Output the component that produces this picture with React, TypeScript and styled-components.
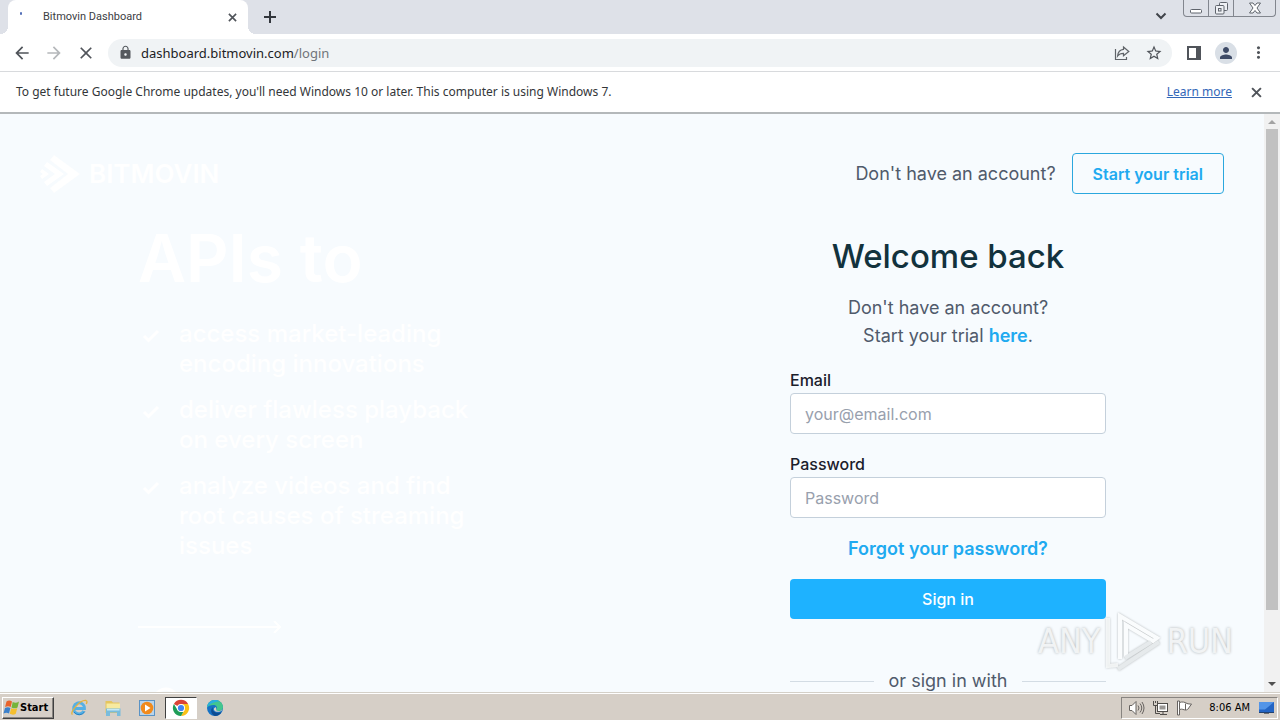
import React from "react";
import styled, { createGlobalStyle } from "styled-components";
import {
  MdArrowBack,
  MdArrowForward,
  MdClose,
  MdLock,
  MdMoreVert,
  MdPerson,
  MdStarBorder,
} from "react-icons/md";

const GlobalStyle = createGlobalStyle`
  * { box-sizing: border-box; }
  body { margin: 0; font-family: Inter, "Liberation Sans", sans-serif; }
  button, input { font: inherit; }
  h1, h2, p, ul { margin: 0; padding: 0; font-weight: 400; }
`;

const tabFont = `Roboto, "Liberation Sans", sans-serif`;
const chromeFont = `"Noto Sans", "Liberation Sans", sans-serif`;
const systemFont = `"DejaVu Sans Condensed", "DejaVu Sans", sans-serif`;

const Desktop = styled.div`
  display: flex;
  flex-direction: column;
  height: 100vh;
  overflow: hidden;
  background: #f7fbfe;
`;

const TabStrip = styled.div`
  display: flex;
  align-items: flex-start;
  height: 34px;
  flex: none;
  padding-left: 8px;
  background: #dee1e8;
`;

const Tab = styled.div`
  display: flex;
  align-items: center;
  position: relative;
  width: 240px;
  height: 34px;
  padding: 0 8px 0 12px;
  background: #fff;
  border-radius: 8px 8px 0 0;
  font: 11px/16px ${tabFont};
  color: #3c4043;

  &::before, &::after {
    content: "";
    position: absolute;
    bottom: 0;
    width: 8px;
    height: 8px;
  }
  &::before {
    left: -8px;
    background: radial-gradient(circle at 0 0, transparent 8px, #fff 8px);
  }
  &::after {
    right: -8px;
    background: radial-gradient(circle at 100% 0, transparent 8px, #fff 8px);
  }
`;

const TabTitle = styled.span`
  flex: 1;
  padding-left: 21px;
`;

const Spinner = styled.span`
  width: 2px;
  height: 3px;
  margin: 0 0 8px 0;
  background: #5570b8;
  border-radius: 1px;
`;

const IconButton = styled.button<{ $size?: number; $color?: string }>`
  display: flex;
  align-items: center;
  justify-content: center;
  flex: none;
  width: ${(p) => p.$size ?? 32}px;
  height: ${(p) => p.$size ?? 32}px;
  padding: 0;
  border: 0;
  background: none;
  color: ${(p) => p.$color ?? "#50545a"};
`;

const NewTab = styled(IconButton)`
  margin: 1px auto 0 6px;
`;

const WindowControls = styled.div`
  display: flex;
  height: 17px;
  margin: 0 4px 0 6px;
  border: 1px solid #82868e;
  border-top: 0;
  border-radius: 0 0 4px 4px;
`;

const WindowButton = styled.button<{ $width: number }>`
  display: flex;
  align-items: center;
  justify-content: center;
  width: ${(p) => p.$width}px;
  padding: 0;
  border: 0;
  background: none;
  & + & { border-left: 1px solid #82868e; }
`;

const Toolbar = styled.div`
  display: flex;
  align-items: center;
  flex: none;
  height: 38px;
  padding: 0 6px;
  background: #fff;
  border-bottom: 1px solid #d8dadd;
`;

const AddressBar = styled.div`
  display: flex;
  align-items: center;
  flex: 1;
  height: 28px;
  margin: 0 6px;
  padding: 0 2px 0 10px;
  background: #f0f3f5;
  border-radius: 14px;
  font: 13px/20px ${chromeFont};
  color: #202124;
`;

const Address = styled.span`
  flex: 1;
  padding-left: 8px;
  span { color: #70757a; }
`;

const Avatar = styled.span`
  display: flex;
  align-items: center;
  justify-content: center;
  width: 22px;
  height: 22px;
  border-radius: 11px;
  background: #d9dfe6;
  color: #3d4a66;
`;

const InfoBar = styled.div`
  display: flex;
  align-items: center;
  justify-content: space-between;
  flex: none;
  height: 42px;
  padding: 0 8px 0 16px;
  background: #fff;
  border-bottom: 2px solid #b4b8ba;
  font: 12px/18px ${chromeFont};
  color: #333639;
`;

const InfoActions = styled.div`
  display: flex;
  align-items: center;
  gap: 8px;
  a { color: #3367b8; }
`;

const Viewport = styled.div`
  display: flex;
  flex: 1;
  min-height: 0;
`;

const Page = styled.div`
  display: grid;
  grid-template-columns: 1fr 1fr;
  flex: 1;
  overflow: hidden;
`;

const Half = styled.section`
  padding: 39px 40px 0;
`;

const PageHeader = styled.header<{ $end?: boolean }>`
  display: flex;
  align-items: center;
  justify-content: ${(p) => (p.$end ? "flex-end" : "flex-start")};
  gap: 16px;
  height: 41px;
  font-size: 18px;
  color: #505a6b;
`;

const Brand = styled.a`
  display: flex;
  align-items: center;
  gap: 9px;
  color: #fff;
  font-size: 26px;
  line-height: 32px;
  font-weight: 600;
  text-decoration: none;
`;

const TrialButton = styled.button`
  height: 41px;
  padding: 0 20px;
  border: 1px solid #2ba7de;
  border-radius: 4px;
  background: transparent;
  color: #20aaf0;
  font-size: 16px;
  font-weight: 600;
`;

const Hero = styled.div`
  width: 440px;
  padding: 28px 0 0 98px;
  color: #fff;
`;

const HeroTitle = styled.h2`
  font-size: 66px;
  line-height: 72px;
  font-weight: 600;
`;

const Benefits = styled.ul`
  display: grid;
  gap: 16px;
  margin: 25px 0 56px;
  list-style: none;
`;

const Benefit = styled.li`
  display: flex;
  gap: 19px;
  font-size: 24px;
  line-height: 30px;
  font-weight: 500;
  white-space: nowrap;
  svg { flex: none; margin: 6px 0 0 4px; }
`;

const PartnerMark = styled.svg`
  display: block;
  margin: 50px 0 0 14px;
`;

const LoginForm = styled.form`
  display: flex;
  flex-direction: column;
  width: 316px;
  margin: 40px auto 0;
`;

const Title = styled.h1`
  margin-bottom: 16px;
  color: #12323d;
  font-size: 33px;
  line-height: 44px;
  font-weight: 500;
  text-align: center;
`;

const Intro = styled.p`
  margin-bottom: 17px;
  color: #505a6b;
  font-size: 18px;
  line-height: 28px;
  text-align: center;
`;

const TextLink = styled.a`
  color: #20aaf0;
  font-size: 18px;
  line-height: 28px;
  font-weight: 600;
  text-align: center;
  text-decoration: none;
`;

const Field = styled.label`
  display: flex;
  flex-direction: column;
  margin-bottom: 17px;
  color: #1b202b;
  font-size: 16px;
  line-height: 26px;
  font-weight: 500;
`;

const TextInput = styled.input`
  width: 100%;
  height: 41px;
  padding: 0 14px;
  border: 1px solid #c4d0db;
  border-radius: 4px;
  background: #fff;
  color: #1b202b;
  font-size: 16px;
  font-weight: 400;
  &::placeholder { color: #98a0ad; opacity: 1; }
`;

const SubmitButton = styled.button`
  height: 40px;
  margin: 16px 0 48px;
  border: 0;
  border-radius: 4px;
  background: #1eb2ff;
  color: #fff;
  font-size: 16px;
  font-weight: 500;
`;

const Divider = styled.div`
  display: flex;
  align-items: center;
  gap: 15px;
  color: #505a6b;
  font-size: 18px;
  line-height: 28px;
  &::before, &::after {
    content: "";
    flex: 1;
    height: 1px;
    background: #d3dce4;
  }
`;

const ScrollTrack = styled.div`
  display: flex;
  flex-direction: column;
  align-items: center;
  width: 16px;
  padding: 6px 0;
  background: #f1f1f1;
`;

const ScrollThumb = styled.div`
  flex: 481;
  width: 12px;
  margin-top: 5px;
  background: #c1c1c1;
`;

const ScrollRest = styled.div`
  flex: 72;
`;

const Taskbar = styled.footer`
  display: flex;
  align-items: center;
  flex: none;
  height: 28px;
  padding: 2px 2px 0;
  background: #d6cfc7;
  border-top: 1px solid #d4d0c8;
  box-shadow: inset 0 1px #fff;
  font: 11px/16px ${systemFont};
`;

const StartButton = styled.button`
  display: flex;
  align-items: center;
  width: 52px;
  height: 22px;
  margin-right: 9px;
  padding: 0;
  border: 1px solid;
  border-color: #fff #404040 #404040 #fff;
  box-shadow: inset -1px -1px #888480;
  background: #d6cfc7;
  color: #000;
  font: bold 11px/16px ${systemFont};
`;

const TaskButton = styled.button<{ $active?: boolean }>`
  display: flex;
  align-items: center;
  justify-content: center;
  width: 32px;
  height: 22px;
  margin-right: 2px;
  padding: 0;
  border: 1px solid;
  border-color: ${(p) => (p.$active ? "#404040 #fff #fff #404040" : "transparent")};
  background: ${(p) => (p.$active ? "#fff" : "none")};
`;

const Tray = styled.div`
  display: flex;
  align-items: center;
  gap: 7px;
  height: 22px;
  margin-left: auto;
  padding: 0 2px 0 6px;
  border: 1px solid;
  border-color: #888480 #fff #fff #888480;
  time { margin: 0 1px 0 9px; white-space: nowrap; }
`;

const Watermark = styled.div`
  position: absolute;
  right: 47px;
  bottom: 47px;
  display: flex;
  align-items: center;
  gap: 3px;
  color: #f1f3f4;
  font: 34px/64px ${systemFont};
  text-shadow: 0 0 3px #aeb2b4;
  pointer-events: none;
  svg { filter: drop-shadow(0 0 1px #b4b8ba); }
`;

const CrossIcon = ({ size }: { size: number }) => (
  <svg width={size} height={size} viewBox="0 0 10 10" fill="none" stroke="currentColor" strokeWidth="1.800">
    <path d="m1 1 8 8M9 1 1 9" />
  </svg>
);

const PlusIcon = () => (
  <svg width="12" height="12" viewBox="0 0 12 12" fill="none" stroke="currentColor" strokeWidth="2">
    <path d="M6 0v12M0 6h12" />
  </svg>
);

const ShareIcon = () => (
  <svg width="16" height="16" viewBox="0 0 16 16" fill="none" stroke="#5f6368" strokeWidth="1.200">
    <path d="M1.500 4v10.500h11V12M9.500 2l5.300 4.500-5.300 4.300V8.300C6.800 8.300 5 9 3.600 11 4 7 6 4.700 9.500 4.400z" />
  </svg>
);

const StartLogo = () => (
  <svg width="17" height="16" viewBox="0 0 17 16">
    <path d="M3.500 1.500C5.500 0 7.500.5 9 1.500L7.700 7C6 6 4.300 6 2.100 7z" fill="#e8632c" />
    <path d="M9.700 2c2 1 4 1 6.300-.500L14.500 7.500c-2 1.300-4 1-6 0z" fill="#75b43c" />
    <path d="M2 8c2-1 3.700-1 5.400 0L6 13.500c-1.700-1-3.500-1-5.500 0z" fill="#3b80cb" />
    <path d="M8.200 8.300c2 1 4 1 6 0l-1.400 5.500c-2 1.200-4 1-6 0z" fill="#f5bf2d" />
  </svg>
);

const ExplorerIcon = () => (
  <svg width="18" height="18" viewBox="0 0 18 18" fill="none">
    <path d="M13.800 12A5.500 5.500 0 1 1 14.500 9.500H5" stroke="#55b0e4" strokeWidth="2.800" />
    <path d="M14.800 12.500A6.500 6.500 0 0 1 4 13" stroke="#2681c4" strokeWidth="1" />
    <path d="M2.500 15.500C-1 14 10 .5 16 1.500c1.500.5 1 2 .3 3.500" stroke="#e4b23c" strokeWidth="1.300" />
  </svg>
);

const FolderIcon = () => (
  <svg width="18" height="18" viewBox="0 0 18 18">
    <path d="M1.500 2h6L9 3.500h6.500V14h-14z" fill="#e5c55e" />
    <path d="M2.500 4.500H16V11H2.500z" fill="#f7eaa0" />
    <path d="M2 9.500h14.500V17H13v-3.500H6V17H2z" fill="#79bcdc" />
    <path d="M3 10h12.500v1.500H3z" fill="#c6e8f5" />
  </svg>
);

const PlayerIcon = () => (
  <svg width="18" height="18" viewBox="0 0 18 18">
    <rect x="1.500" y="1.500" width="15" height="15" fill="#b9d4eb" stroke="#5a93c5" />
    <circle cx="9" cy="9" r="6.300" fill="#f18a1c" />
    <path d="M7 5.500 12.500 9 7 12.500z" fill="#fff" />
  </svg>
);

const ChromeIcon = () => (
  <svg width="18" height="18" viewBox="0 0 18 18">
    <path d="M9 9 1.900 5A8.100 8.100 0 0 1 16.100 5H9z" fill="#db4437" />
    <path d="M9 5h7.100A8.100 8.100 0 0 1 9 17.100L12.500 11z" fill="#fbc116" />
    <path d="M1.900 5 5.500 11 9 13h2.300L9 17.100A8.100 8.100 0 0 1 1.900 5z" fill="#1f9d58" />
    <circle cx="9" cy="9" r="4" fill="#fff" />
    <circle cx="9" cy="9" r="3.100" fill="#4285f4" />
  </svg>
);

const EdgeIcon = () => (
  <svg width="18" height="18" viewBox="0 0 18 18">
    <circle cx="9" cy="9" r="8" fill="#1672c4" />
    <path d="M1 8.500C1.500 3.500 5 1 9 1c5 0 8 3.500 8 7 0 2.500-2 4-4.500 4-2 0-3-.800-2-2 1-1.500 0-4-3-4-3 0-5.500 1-6.500 2.500z" fill="#43c68e" />
    <path d="M1 8.500C1.500 3.500 5 1 9 1c2 0 3.700.600 5 1.500C10 2.500 4 4 1 8.500z" fill="#29aee0" />
    <path d="M7 8c-1.500 4 2 7 8.500 5.300C14 15.500 12 17 9 17c-3.500-1-5.500-6-2-9z" fill="#0d4c91" />
    <path d="M9.500 8c2 2-1 3.500 3 4 2 0 3-.600 4-1.500-1 2.500-7 3.500-8.500.500-.600-1.500.500-2 1.500-3z" fill="#d6cfc7" />
  </svg>
);

const SpeakerIcon = () => (
  <svg width="17" height="16" viewBox="0 0 17 16" fill="none" stroke="#66625f">
    <path d="M1.500 5.500h2.500l4-4v13l-4-4H1.500z" fill="#fff" />
    <path d="M10 5.500q2 2.500 0 5M12 3.500q3.500 4.500 0 9M14 2q4 6 0 12" />
  </svg>
);

const NetworkIcon = () => (
  <svg width="17" height="16" viewBox="0 0 17 16" fill="none" stroke="#4f4c49">
    <rect x="5.500" y="3.500" width="10" height="8" fill="#fff" />
    <rect x="7.500" y="5.500" width="6" height="4" fill="#9a9794" stroke="none" />
    <path d="M8 14.500h7M11 12v2M1.500 1v4.500h4V1M3.500 1v2M3.500 5.500v8H8" />
  </svg>
);

const FlagIcon = () => (
  <svg width="17" height="16" viewBox="0 0 17 16" fill="#fff" stroke="#66625f">
    <path d="M1.500 1v14h2V9.500c3-1 4 .500 6 .500 1.500 0 2-.500 2.500-1L15.500 4c-2 0-3 0-4.500-.500-2-1.500-5-2-7.500-1V1z" />
    <path d="M3.500 2.500v7M9.500 3.500V10" />
  </svg>
);

const DesktopIcon = () => (
  <svg width="17" height="16" viewBox="0 0 17 16">
    <path d="M1 2h15v10H1z" fill="#2465c4" />
    <path d="M1 2h15L7 9.500H1z" fill="#5395e8" />
    <path d="M1 12h15v1H1z" fill="#234270" />
    <path d="M6 13h5v1H6z" fill="#707070" />
  </svg>
);

const benefits = [
  ["access market-leading", "encoding innovations"],
  ["deliver flawless playback", "on every screen"],
  ["analyze videos and find", "root causes of streaming", "issues"],
];

export default function App() {
  return (
    <Desktop>
      <GlobalStyle />
      <TabStrip>
        <Tab>
          <Spinner />
          <TabTitle>Bitmovin Dashboard</TabTitle>
          <IconButton $size={16} aria-label="Close tab"><CrossIcon size={9} /></IconButton>
        </Tab>
        <NewTab aria-label="New tab" $color="#33373d"><PlusIcon /></NewTab>
        <IconButton aria-label="Search tabs">
          <svg width="12" height="8" viewBox="0 0 12 8" fill="none" stroke="#40444a" strokeWidth="2"><path d="m1.500 1.500 4.500 4.500 4.500-4.500" /></svg>
        </IconButton>
        <WindowControls>
          <WindowButton $width={24} aria-label="Minimize">
            <svg width="13" height="12" viewBox="0 0 13 12" fill="#fff" stroke="#5f646c"><rect x=".5" y="7.500" width="11" height="3.500" rx="1" /></svg>
          </WindowButton>
          <WindowButton $width={25} aria-label="Restore">
            <svg width="13" height="13" viewBox="0 0 13 13" fill="#eef0f4" stroke="#5f646c"><rect x="4.500" y=".5" width="8" height="8" rx="1" /><rect x=".5" y="3.500" width="8.500" height="8.500" rx="1" /><rect x="3.500" y="6.500" width="2.500" height="2.500" /></svg>
          </WindowButton>
          <WindowButton $width={42} aria-label="Close">
            <svg width="12" height="12" viewBox="0 0 12 12" fill="#fff" stroke="#5f646c"><path d="M.5 1h3.500l2 2.500L8 1h3.500L8 6l3.500 5H8L6 8.500 4 11H.5L4 6z" /></svg>
          </WindowButton>
        </WindowControls>
      </TabStrip>
      <Toolbar>
        <IconButton aria-label="Back"><MdArrowBack size={20} /></IconButton>
        <IconButton aria-label="Forward" $color="#b5b8bb"><MdArrowForward size={20} /></IconButton>
        <IconButton aria-label="Stop loading"><MdClose size={20} /></IconButton>
        <AddressBar>
          <MdLock size={15} color="#55595e" />
          <Address>dashboard.bitmovin.com<span>/login</span></Address>
          <IconButton aria-label="Share"><ShareIcon /></IconButton>
          <IconButton aria-label="Bookmark"><MdStarBorder size={18} /></IconButton>
        </AddressBar>
        <IconButton aria-label="Side panel">
          <svg width="14" height="14" viewBox="0 0 14 14"><path d="M1 1h12v12H1z" fill="none" stroke="#50545a" strokeWidth="2" /><path d="M9 1h4v12H9z" fill="#50545a" /></svg>
        </IconButton>
        <IconButton aria-label="Profile"><Avatar><MdPerson size={18} /></Avatar></IconButton>
        <IconButton aria-label="Menu"><MdMoreVert size={19} /></IconButton>
      </Toolbar>
      <InfoBar>
        <span>To get future Google Chrome updates, you'll need Windows 10 or later. This computer is using Windows 7.</span>
        <InfoActions>
          <a href="#update">Learn more</a>
          <IconButton aria-label="Dismiss"><CrossIcon size={11} /></IconButton>
        </InfoActions>
      </InfoBar>

      <Viewport>
        <Page>
          <Half>
            <PageHeader>
              <Brand href="#home">
                <svg width="40" height="40" viewBox="0 0 40 40" fill="#fff">
                  <path d="M14 1 40 20 14 39l-4-5 18-14L10 6z" />
                  <path d="m7 8 17 12L7 32l-3-4 11-8L4 12zM2 15l7 5-7 5-2-3 3-2-3-2z" />
                </svg>
                BITMOVIN
              </Brand>
            </PageHeader>
            <Hero>
              <HeroTitle>APIs to</HeroTitle>
              <Benefits>
                {benefits.map((lines) => (
                  <Benefit key={lines[0]}>
                    <svg width="18" height="20" viewBox="0 0 18 20" fill="none" stroke="#fff" strokeWidth="3"><path d="m2 11 4.500 4.500L16 6" /></svg>
                    <span>{lines.map((line) => <div key={line}>{line}</div>)}</span>
                  </Benefit>
                ))}
              </Benefits>
              <svg width="144" height="12" viewBox="0 0 144 12" fill="none" stroke="#fff" strokeWidth="2"><path d="M0 6h142M136 0l6 6-6 6" /></svg>
              <PartnerMark width="28" height="28" viewBox="0 0 28 28" fill="none" stroke="#fff" strokeWidth="3"><circle cx="14" cy="14" r="12" /></PartnerMark>
            </Hero>
          </Half>
          <Half>
            <PageHeader $end>
              <span>Don't have an account?</span>
              <TrialButton>Start your trial</TrialButton>
            </PageHeader>
            <LoginForm>
              <Title>Welcome back</Title>
              <Intro>
                Don't have an account?<br />
                Start your trial <TextLink href="#trial">here</TextLink>.
              </Intro>
              <Field>Email<TextInput type="email" placeholder="your@email.com" /></Field>
              <Field>Password<TextInput type="password" placeholder="Password" /></Field>
              <TextLink href="#forgot">Forgot your password?</TextLink>
              <SubmitButton type="button">Sign in</SubmitButton>
              <Divider>or sign in with</Divider>
            </LoginForm>
          </Half>
        </Page>
        <ScrollTrack>
          <svg width="8" height="4" viewBox="0 0 8 4"><path d="m4 0 4 4H0z" fill="#a3a3a3" /></svg>
          <ScrollThumb />
          <ScrollRest />
          <svg width="8" height="4" viewBox="0 0 8 4"><path d="M0 0h8L4 4z" fill="#505050" /></svg>
        </ScrollTrack>
      </Viewport>

      <Taskbar>
        <StartButton><StartLogo />Start</StartButton>
        <TaskButton aria-label="Internet Explorer"><ExplorerIcon /></TaskButton>
        <TaskButton aria-label="Files"><FolderIcon /></TaskButton>
        <TaskButton aria-label="Media player"><PlayerIcon /></TaskButton>
        <TaskButton $active aria-label="Chrome"><ChromeIcon /></TaskButton>
        <TaskButton aria-label="Edge"><EdgeIcon /></TaskButton>
        <Tray>
          <SpeakerIcon />
          <NetworkIcon />
          <FlagIcon />
          <time>8:06 AM</time>
          <DesktopIcon />
        </Tray>
      </Taskbar>

      <Watermark>
        <span>ANY</span>
        <svg width="60" height="64" viewBox="0 0 60 64" fill="none" stroke="#fafcfd" strokeWidth="4">
          <path d="M5 9v48l10-1" strokeOpacity=".8" />
          <path d="M17 50V7l37 22-4 3-27-16v32" />
          <path d="M15 60l41-27M22 49l26-16" stroke="#e6eaec" />
        </svg>
        <span>RUN</span>
      </Watermark>
    </Desktop>
  );
}
